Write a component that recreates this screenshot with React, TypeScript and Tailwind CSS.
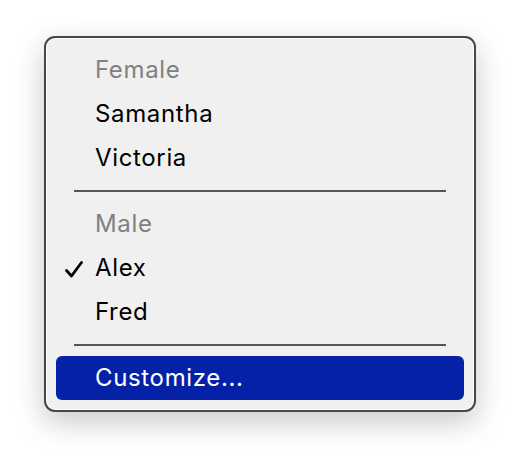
import React from "react";

function Check() {
  return (
    <svg width="18" height="17" viewBox="0 0 18 17" className="absolute left-[9px] top-[15px]">
      <polyline
        points="1.5,9.5 6.5,15 16.5,1.5"
        fill="none"
        stroke="black"
        strokeWidth="2.8"
        strokeLinecap="round"
        strokeLinejoin="round"
      />
    </svg>
  );
}

function Header({ label }: { label: string }) {
  return <div className="flex h-[44px] items-center pl-[49px] text-[#808080]">{label}</div>;
}

function Item({ label, checked }: { label: string; checked?: boolean }) {
  return (
    <div className="relative mx-[10px] flex h-[44px] items-center pl-[39px] text-black">
      {checked && <Check />}
      {label}
    </div>
  );
}

function Separator() {
  return (
    <div className="flex h-[22px] items-center px-[28px]">
      <div className="h-[1.5px] w-full bg-[#555555]" />
    </div>
  );
}

export default function App() {
  return (
    <div
      className="flex h-[464px] w-[520px] justify-center bg-white pt-[36px]"
      style={{ fontFamily: "Inter, 'Noto Sans', sans-serif" }}
    >
      <div className="h-[376px] w-[432px] rounded-[11px] border-2 border-[#474747] bg-[#f0f0f0] py-[10px] text-[24px] tracking-[0.65px] shadow-[0_10px_30px_rgba(0,0,0,0.22),inset_0_0_0_1px_rgba(255,255,255,0.9)]">
        <Header label="Female" />
        <Item label="Samantha" />
        <Item label="Victoria" />
        <Separator />
        <Header label="Male" />
        <Item label="Alex" checked />
        <Item label="Fred" />
        <Separator />
        <div className="mx-[10px] flex h-[44px] items-center rounded-[6px] bg-[#0521a8] pl-[39px] text-white">
          Customize...
        </div>
      </div>
    </div>
  );
}
